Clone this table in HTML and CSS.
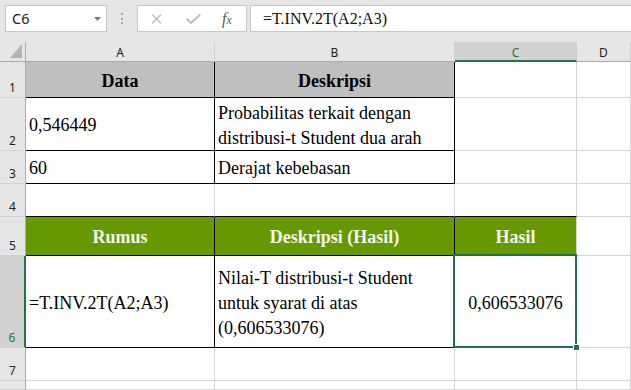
FILE: index.html
```html
<!DOCTYPE html>
<html>
<head>
<meta charset="utf-8">
<link rel="stylesheet" href="styles.css">
</head>
<body>
<div class="app">
  <div class="toolbar">
    <div class="namebox">
      <span class="name">C6</span>
      <svg class="caret" width="7" height="4" viewBox="0 0 7 4"><polygon points="0,0 7,0 3.5,4" fill="#7a7a7a"/></svg>
    </div>
    <div class="dots"><i></i><i></i><i></i></div>
    <div class="fbtns">
      <svg class="xicon" width="11" height="10" viewBox="0 0 11 10"><path d="M1 0.5 L10 9.5 M10 0.5 L1 9.5" stroke="#bdbdbd" stroke-width="1.4" fill="none"/></svg>
      <svg class="check" width="15" height="10" viewBox="0 0 15 10"><path d="M0.8 4.8 L5 9 L14.2 0.6" stroke="#bdbdbd" stroke-width="2" fill="none"/></svg>
      <span class="fx"><span class="fx-f">f</span><span class="fx-x">x</span></span>
    </div>
    <div class="formula">=T.INV.2T(A2;A3)</div>
  </div>

  <div class="sheet">
    <div class="corner"><svg width="12" height="14" viewBox="0 0 12 14"><polygon points="12,0 12,14 0,14" fill="#b4b4b4"/></svg></div>
    <div class="ch">A</div>
    <div class="ch">B</div>
    <div class="ch ch-sel">C</div>
    <div class="ch">D</div>

    <div class="rh">1</div>
    <div class="c tb hd bold">Data</div>
    <div class="c tb hd bold">Deskripsi</div>
    <div class="c"></div>
    <div class="c"></div>

    <div class="rh">2</div>
    <div class="c tb txt">0,546449</div>
    <div class="c tb txt wrap">Probabilitas terkait dengan<br>distribusi-t Student dua arah</div>
    <div class="c"></div>
    <div class="c"></div>

    <div class="rh">3</div>
    <div class="c tb txt">60</div>
    <div class="c tb txt">Derajat kebebasan</div>
    <div class="c"></div>
    <div class="c"></div>

    <div class="rh">4</div>
    <div class="c bb"></div>
    <div class="c bb"></div>
    <div class="c bb"></div>
    <div class="c"></div>

    <div class="rh">5</div>
    <div class="c tb gr bold">Rumus</div>
    <div class="c tb gr bold">Deskripsi (Hasil)</div>
    <div class="c bb gr bold">Hasil</div>
    <div class="c"></div>

    <div class="rh rh-sel">6</div>
    <div class="c tb txt">=T.INV.2T(A2;A3)</div>
    <div class="c tb txt wrap">Nilai-T distribusi-t Student<br>untuk syarat di atas<br>(0,606533076)</div>
    <div class="c txt mid sel-cell">0,606533076<div class="sel"><div class="handle"></div></div></div>
    <div class="c"></div>

    <div class="rh">7</div>
    <div class="c"></div>
    <div class="c"></div>
    <div class="c"></div>
    <div class="c"></div>

    <div class="rh"></div>
    <div class="c"></div>
    <div class="c"></div>
    <div class="c"></div>
    <div class="c"></div>
  </div>
</div>
</body>
</html>
```

FILE: styles.css
```css
html, body {
  margin: 0;
  padding: 0;
  width: 631px;
  height: 390px;
  overflow: hidden;
  background: #ffffff;
}

.app {
  width: 631px;
  height: 390px;
  display: flex;
  flex-direction: column;
  overflow: hidden;
}

/* ---------- toolbar ---------- */
.toolbar {
  height: 42px;
  flex: none;
  box-sizing: border-box;
  background: #e6e6e6;
  display: flex;
  align-items: flex-start;
  padding: 5px 0 0 5px;
}

.namebox {
  width: 102px;
  height: 27px;
  box-sizing: border-box;
  background: #ffffff;
  border: 1px solid #c6c6c6;
  display: flex;
  align-items: center;
  justify-content: space-between;
  padding: 0 5px 0 6px;
}

.name {
  font-family: "Noto Sans", "Open Sans", sans-serif;
  font-size: 14.5px;
  color: #222222;
  line-height: 1;
}

.caret {
  margin-top: 1px;
}

.dots {
  margin-left: 14px;
  width: 2px;
  height: 27px;
  display: flex;
  flex-direction: column;
  justify-content: center;
  gap: 2.5px;
}

.dots i {
  display: block;
  width: 2px;
  height: 2px;
  background: #a8a8a8;
}

.fbtns {
  margin-left: 14px;
  width: 110px;
  height: 27px;
  box-sizing: border-box;
  background: #ffffff;
  border: 1px solid #c6c6c6;
  display: flex;
  align-items: center;
  padding-left: 13px;
}

.check {
  margin-left: 24px;
}

.fx {
  margin-left: 21px;
  font-family: "Liberation Serif", "Times New Roman", serif;
  font-style: italic;
  color: #5a5a5a;
  line-height: 1;
  display: flex;
  align-items: baseline;
}

.fx-f {
  font-size: 16px;
}

.fx-x {
  font-size: 12px;
}

.formula {
  margin-left: 3px;
  flex: 1;
  height: 27px;
  box-sizing: border-box;
  background: #ffffff;
  border: 1px solid #c6c6c6;
  border-right: none;
  padding-left: 12px;
  font-family: "Liberation Serif", "Times New Roman", serif;
  font-size: 16px;
  line-height: 26px;
  color: #111111;
}

/* ---------- sheet grid ---------- */
.sheet {
  flex: 1;
  display: grid;
  grid-template-columns: 26px 189px 240px 122px 1fr;
  grid-template-rows: 20px 36px 53px 33px 33px 39px 92px 33px 1fr;
  background: #ffffff;
}

.corner {
  background: #e6e6e6;
  border-right: 1px solid #ababab;
  border-bottom: 1px solid #ababab;
  box-sizing: border-box;
  display: flex;
  align-items: flex-end;
  justify-content: flex-end;
  padding: 0 3px 3px 0;
}

.ch {
  background: #e6e6e6;
  border-right: 1px solid #d0d0d0;
  border-bottom: 1px solid #ababab;
  box-sizing: border-box;
  display: flex;
  align-items: center;
  justify-content: center;
  font-family: "Noto Sans", "Open Sans", sans-serif;
  font-size: 12px;
  color: #222222;
  padding-top: 1px;
}

.ch-sel {
  background: #d2d2d2;
  color: #217346;
  border-bottom: 2px solid #217346;
  padding-top: 2px;
}

.rh {
  background: #e6e6e6;
  border-right: 1px solid #ababab;
  border-bottom: 1px solid #d0d0d0;
  box-sizing: border-box;
  display: flex;
  align-items: flex-end;
  justify-content: center;
  font-family: "Noto Sans", "Open Sans", sans-serif;
  font-size: 12px;
  line-height: 12px;
  color: #222222;
  padding-bottom: 3px;
}

.rh-sel {
  background: #d2d2d2;
  color: #217346;
  border-right: 2px solid #217346;
}

.c {
  border-right: 1px solid #d4d4d4;
  border-bottom: 1px solid #d4d4d4;
  box-sizing: border-box;
  font-family: "Liberation Serif", "Times New Roman", serif;
  font-size: 18px;
  color: #000000;
  min-width: 0;
}

.tb {
  border-right-color: #000000;
  border-bottom-color: #000000;
}

.bb {
  border-bottom-color: #000000;
}

.hd {
  background: #bfbfbf;
}

.gr {
  background: #669900;
  color: #f4f7f0;
}

.bold {
  font-weight: bold;
  display: flex;
  align-items: center;
  justify-content: center;
  padding-top: 3px;
}

.txt {
  display: flex;
  align-items: center;
  padding: 3px 3px 0 3px;
  line-height: 25px;
  white-space: nowrap;
}

.wrap {
  display: flex;
  align-items: center;
}

.mid {
  justify-content: center;
}

.sel-cell {
  position: relative;
}

.sel {
  position: absolute;
  left: -2px;
  top: -2px;
  right: -1px;
  bottom: -1px;
  border: 2px solid #217346;
}

.handle {
  position: absolute;
  right: -5px;
  bottom: -5px;
  width: 5px;
  height: 5px;
  background: #217346;
  border: 1px solid #ffffff;
}
```
